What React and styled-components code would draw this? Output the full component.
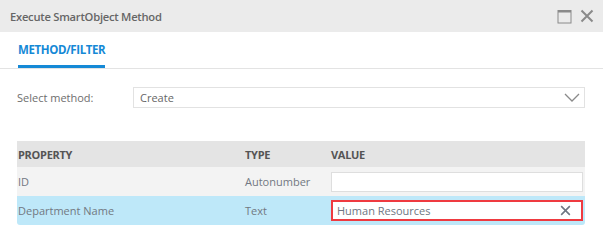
import styled, { createGlobalStyle } from 'styled-components';

const Global = createGlobalStyle`
  html, body { margin: 0; padding: 0; background: #fff; }
  body { font-family: "Open Sans", "Liberation Sans", sans-serif; }
`;

const Dialog = styled.div`
  width: 603px;
  height: 243px;
  background: #fff;
  overflow: hidden;
`;

const Header = styled.div`
  height: 32px;
  background: #ebebeb;
  display: flex;
  align-items: center;
  justify-content: space-between;
  padding: 0 9px 0 10px;
`;

const Title = styled.div`
  font-size: 11.2px;
  font-weight: 600;
  color: #666;
  letter-spacing: -0.25px;
`;

const HeaderIcons = styled.div`
  display: flex;
  align-items: center;
  gap: 8px;
`;

const TabBar = styled.div`
  height: 36px;
  border-bottom: 1px solid #e3e3e3;
  display: flex;
  align-items: flex-end;
  padding-left: 18px;
`;

const Tab = styled.div`
  font-size: 11.5px;
  font-weight: 700;
  color: ${(p) => (p.$active ? '#1589d6' : '#777')};
  letter-spacing: -0.4px;
  padding-bottom: 8px;
  border-bottom: 3px solid ${(p) => (p.$active ? '#1589d6' : 'transparent')};
`;

const Body = styled.div`
  padding: 18px 18px 0 17px;
`;

const FieldRow = styled.div`
  display: flex;
  align-items: center;
`;

const Label = styled.div`
  width: 116px;
  font-size: 11px;
  color: #6e6e6e;
`;

const Select = styled.div`
  flex: 1;
  height: 19px;
  border: 1px solid #e2e2e2;
  display: flex;
  align-items: center;
  justify-content: space-between;
  padding: 0 4px 0 6px;
  font-size: 11px;
  color: #666;
`;

const Table = styled.div`
  margin-top: 33px;
  width: 568px;
  border-radius: 0 0 3px 3px;
  overflow: hidden;
`;

const Row = styled.div`
  display: grid;
  grid-template-columns: 227px 86px 1fr;
  align-items: center;
  height: ${(p) => p.$h}px;
  background: ${(p) => p.$bg};
  padding-left: 1px;
  padding-right: 2px;
`;

const HeadCell = styled.div`
  font-size: 11px;
  font-weight: 700;
  color: #555;
  letter-spacing: -0.3px;
`;

const Cell = styled.div`
  font-size: 11px;
  color: #727882;
`;

const Input = styled.div`
  height: ${(p) => (p.$error ? 17 : 18)}px;
  border: ${(p) => (p.$error ? '2px solid #ef3a40' : '1px solid #dedede')};
  background: #fff;
  display: flex;
  align-items: center;
  justify-content: space-between;
  padding: 0 10px 0 4px;
  font-size: 11px;
  color: #6e7682;
`;

function MaximizeIcon() {
  return (
    <svg width="15" height="15" viewBox="0 0 15 15">
      <rect x="1" y="1.5" width="13" height="12.5" fill="none" stroke="#8a8a8a" strokeWidth="1" />
      <rect x="1" y="1" width="13" height="2.5" fill="#8a8a8a" />
    </svg>
  );
}

function CloseIcon({ size = 14, color = '#8a8a8a', w = 2 }) {
  return (
    <svg width={size} height={size} viewBox="0 0 14 14">
      <path d="M1.5 1.5 L12.5 12.5 M12.5 1.5 L1.5 12.5" stroke={color} strokeWidth={w} />
    </svg>
  );
}

function Chevron() {
  return (
    <svg width="16" height="9" viewBox="0 0 16 9">
      <path d="M1 1 L8 8 L15 1" fill="none" stroke="#8a8a8a" strokeWidth="1.3" />
    </svg>
  );
}

const rows = [
  { name: 'ID', type: 'Autonumber', value: '', bg: '#f3f3f3' },
  { name: 'Department Name', type: 'Text', value: 'Human Resources', bg: '#bee8f9', error: true },
];

export default function App() {
  return (
    <>
      <Global />
      <Dialog>
        <Header>
          <Title>Execute SmartObject Method</Title>
          <HeaderIcons>
            <MaximizeIcon />
            <CloseIcon />
          </HeaderIcons>
        </Header>
        <TabBar>
          <Tab $active>METHOD/FILTER</Tab>
        </TabBar>
        <Body>
          <FieldRow>
            <Label>Select method:</Label>
            <Select>
              <span>Create</span>
              <Chevron />
            </Select>
          </FieldRow>
          <Table>
            <Row $h={26} $bg="#e4e4e4">
              <HeadCell>PROPERTY</HeadCell>
              <HeadCell>TYPE</HeadCell>
              <HeadCell>VALUE</HeadCell>
            </Row>
            {rows.map((r) => (
              <Row key={r.name} $h={29} $bg={r.bg}>
                <Cell>{r.name}</Cell>
                <Cell>{r.type}</Cell>
                <Input $error={r.error}>
                  <span>{r.value}</span>
                  {r.error && <CloseIcon size={11} color="#6e7682" w={2} />}
                </Input>
              </Row>
            ))}
          </Table>
        </Body>
      </Dialog>
    </>
  );
}
